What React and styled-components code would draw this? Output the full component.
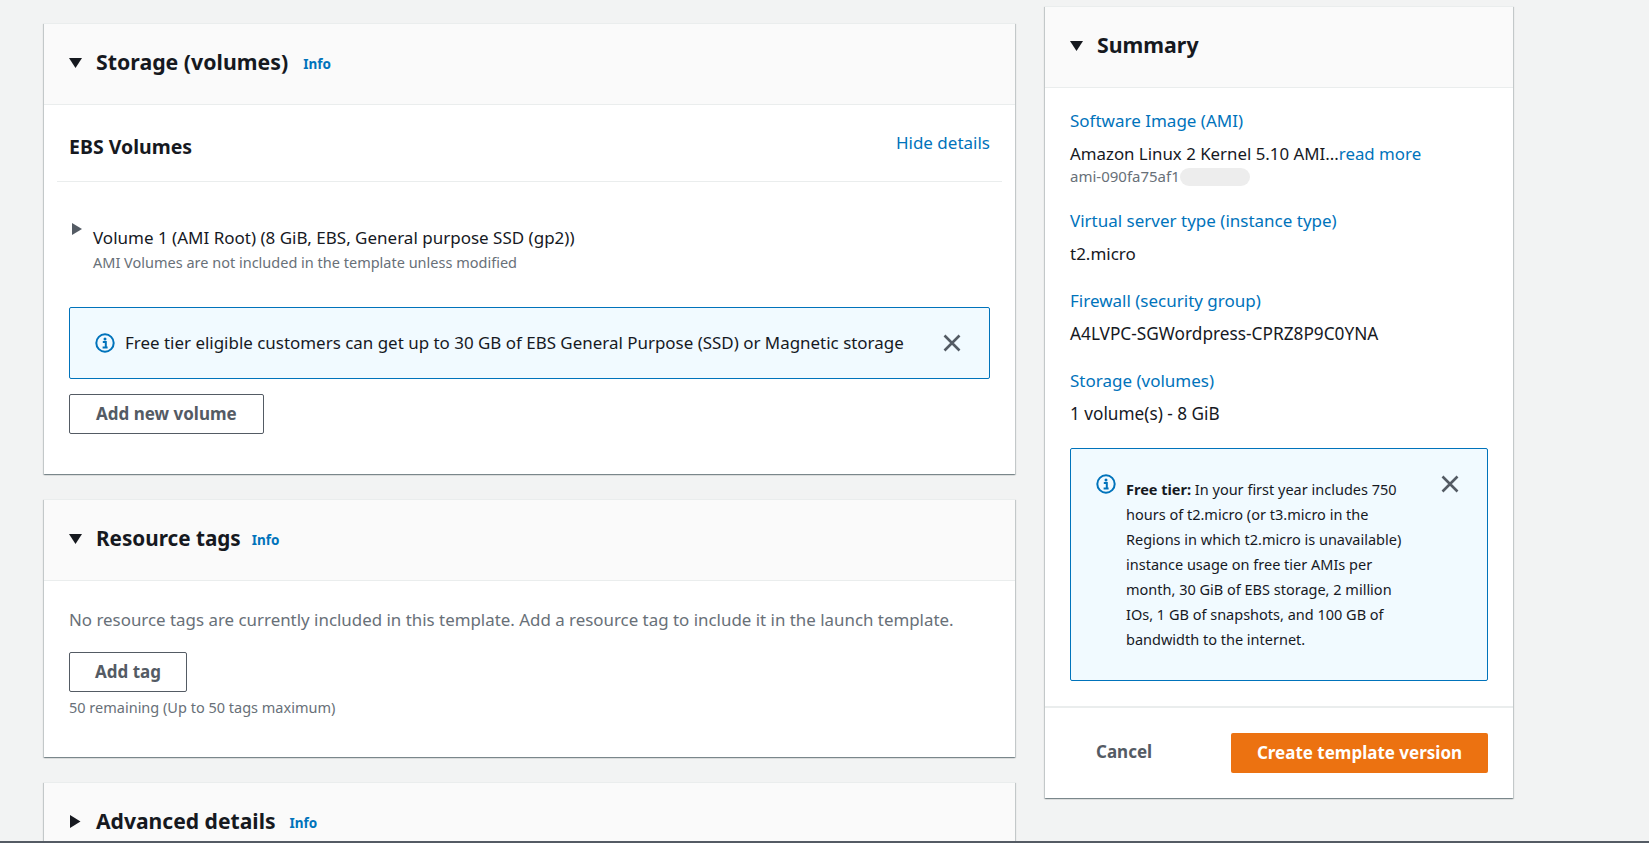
import React from 'react';
import styled, { createGlobalStyle } from 'styled-components';

const GlobalStyle = createGlobalStyle`
  html, body {
    margin: 0;
    padding: 0;
    background: #f2f3f3;
    font-family: "Noto Sans", "Open Sans", sans-serif;
    color: #16191f;
  }
  * { box-sizing: border-box; }
`;

const Page = styled.div`
  height: 843px;
  display: flex;
  flex-direction: column;
  overflow: hidden;
`;

const Content = styled.div`
  flex: 1;
  min-height: 0;
  overflow: hidden;
  display: flex;
  align-items: flex-start;
  padding-left: 44px;
  gap: 30px;
`;

const BottomRule = styled.div`
  height: 2px;
  flex: none;
  background: #545b64;
`;

const LeftColumn = styled.div`
  width: 971px;
  flex: none;
  padding-top: 23px;
  display: flex;
  flex-direction: column;
  gap: 25px;
`;

const Card = styled.section`
  background: #fff;
  border-top: 1px solid #eaeded;
  box-shadow: 0 1px 1px 0 rgba(0, 28, 36, 0.3), 1px 1px 1px 0 rgba(0, 28, 36, 0.15), -1px 1px 1px 0 rgba(0, 28, 36, 0.15);
`;

const SummaryCard = styled(Card)`
  width: 468px;
  flex: none;
  margin-top: 6px;
`;

const CardHeader = styled.header`
  height: 81px;
  background: #fafafa;
  border-bottom: 1px solid #eaeded;
  display: flex;
  align-items: center;
  padding: 0 0 4px 25px;
`;

const Caret = styled.svg`
  width: 13px;
  height: 13px;
  flex: none;
  margin-right: 14px;
  fill: ${p => p.$color || '#16191f'};
`;

const CardTitle = styled.h2`
  margin: 0;
  font-size: ${p => p.$size || 21.3}px;
  line-height: 28px;
  font-weight: 700;
  color: #16191f;
`;

const InfoLink = styled.a`
  margin-left: ${p => p.$gap || 15}px;
  font-size: 13.5px;
  line-height: 20px;
  font-weight: 700;
  color: #0073bb;
  position: relative;
  top: 2px;
`;

const StorageBody = styled.div`
  padding: 0 25px 40px;
`;

const EbsHeader = styled.div`
  margin: 0 -12px;
  padding: 7px 12px 0 12px;
  height: 77px;
  border-bottom: 1px solid #eaeded;
  display: flex;
  align-items: center;
  justify-content: space-between;
`;

const EbsTitle = styled.h3`
  margin: 0;
  font-size: 19.5px;
  line-height: 24px;
  font-weight: 700;
`;

const HideLink = styled.a`
  font-size: 17px;
  line-height: 24px;
  color: #0073bb;
  position: relative;
  top: -4px;
`;

const VolumeRow = styled.div`
  display: flex;
  align-items: flex-start;
  margin-top: 40px;
`;

const VolumeCaret = styled(Caret)`
  width: 12px;
  height: 14px;
  margin: 0 10px 0 2px;
`;

const VolumeTitle = styled.div`
  font-size: 17px;
  line-height: 24px;
  margin: 4px 0 2px;
`;

const Hint = styled.div`
  font-size: 14.5px;
  line-height: 20px;
  color: #687078;
`;

const Alert = styled.div`
  background: #f1faff;
  border: 1px solid #0073bb;
  border-radius: 2px;
  display: flex;
`;

const BannerAlert = styled(Alert)`
  height: 72px;
  margin-top: 35px;
  align-items: center;
  padding: 0 28px 0 25px;
`;

const InfoIcon = styled.svg`
  width: 20px;
  height: 20px;
  flex: none;
  color: #0073bb;
`;

const BannerText = styled.div`
  flex: 1;
  margin-left: 10px;
  font-size: 16.94px;
  line-height: 24px;
`;

const CloseIcon = styled.svg`
  width: 18px;
  height: 18px;
  flex: none;
  color: #545b64;
`;

const OutlineButton = styled.button`
  display: block;
  height: 40px;
  padding: 0 26px 2px;
  background: #fff;
  border: 1px solid #545b64;
  border-radius: 2px;
  font-family: inherit;
  font-size: 17px;
  font-weight: 700;
  color: #545b64;
`;

const AddVolumeButton = styled(OutlineButton)`
  margin-top: 15px;
`;

const TagsBody = styled.div`
  padding: 27px 25px 40px;
`;

const TagsText = styled.p`
  margin: 0;
  font-size: 16.9px;
  line-height: 24px;
  color: #687078;
`;

const AddTagButton = styled(OutlineButton)`
  margin: 20px 0 5px;
  padding: 0 25px 2px;
`;

const SummaryBody = styled.div`
  padding: 21px 25px 25px 25px;
`;

const SummaryGroup = styled.div`
  margin-bottom: ${p => p.$last ? 22 : 23}px;
`;

const SummaryLabel = styled.a`
  display: block;
  font-size: 17px;
  line-height: 24px;
  color: #0073bb;
`;

const SummaryValue = styled.div`
  font-size: ${p => p.$size || 17}px;
  line-height: 24px;
  margin-top: 9px;
  color: #16191f;
`;

const ReadMore = styled.a`
  color: #0073bb;
`;

const AmiId = styled.div`
  position: relative;
  font-size: 15px;
  line-height: 19px;
  color: #687078;
  margin-top: 1px;
`;

const Redaction = styled.span`
  position: absolute;
  left: 110px;
  top: 1px;
  width: 70px;
  height: 18px;
  border-radius: 9px;
  background: #ededed;
`;

const TierAlert = styled(Alert)`
  height: 233px;
  padding: 25px 25px 0 25px;
  align-items: flex-start;
`;

const TierText = styled.div`
  width: 282px;
  margin: 3px 0 0 10px;
  font-size: 14.5px;
  line-height: 25px;
  color: #16191f;
`;

const TierClose = styled(CloseIcon)`
  margin: 1px 0 0 33px;
`;

const SummaryFooter = styled.footer`
  border-top: 2px solid #eaeded;
  height: 92px;
  padding: 25px 25px 0 51px;
  display: flex;
  align-items: flex-start;
  justify-content: space-between;
`;

const CancelLink = styled.a`
  font-size: 17px;
  line-height: 38px;
  font-weight: 700;
  color: #545b64;
`;

const PrimaryButton = styled.button`
  width: 257px;
  height: 40px;
  padding-bottom: 2px;
  background: #ec7211;
  border: none;
  border-radius: 2px;
  font-family: inherit;
  font-size: 17px;
  font-weight: 700;
  color: #fff;
`;

const CaretDown = () => (
  <Caret viewBox="0 0 13 13"><path d="M0 2h13L6.5 12z" /></Caret>
);

const CaretRight = () => (
  <Caret viewBox="0 0 13 13"><path d="M1 0l10.5 6.5L1 13z" /></Caret>
);

const Info = () => (
  <InfoIcon viewBox="0 0 20 20" fill="none">
    <circle cx="10" cy="10" r="8.7" stroke="currentColor" strokeWidth="2" />
    <circle cx="10" cy="6" r="1.5" fill="currentColor" />
    <path d="M7.8 9h3v5M7.6 14.4h5" stroke="currentColor" strokeWidth="2" />
  </InfoIcon>
);

const CloseSvg = ({ as: Comp = CloseIcon }) => (
  <Comp viewBox="0 0 18 18" fill="none">
    <path d="M1.5 1.5l15 15M16.5 1.5l-15 15" stroke="currentColor" strokeWidth="2.6" />
  </Comp>
);

const App = () => (
  <>
    <GlobalStyle />
    <Page>
      <Content>
        <LeftColumn>
          <Card>
            <CardHeader>
              <CaretDown />
              <CardTitle>Storage (volumes)</CardTitle>
              <InfoLink>Info</InfoLink>
            </CardHeader>
            <StorageBody>
              <EbsHeader>
                <EbsTitle>EBS Volumes</EbsTitle>
                <HideLink>Hide details</HideLink>
              </EbsHeader>
              <VolumeRow>
                <VolumeCaret $color="#545b64" viewBox="0 0 12 14"><path d="M1 1l10 6-10 6z" /></VolumeCaret>
                <div>
                  <VolumeTitle>Volume 1 (AMI Root) (8 GiB, EBS, General purpose SSD (gp2))</VolumeTitle>
                  <Hint>AMI Volumes are not included in the template unless modified</Hint>
                </div>
              </VolumeRow>
              <BannerAlert>
                <Info />
                <BannerText>Free tier eligible customers can get up to 30 GB of EBS General Purpose (SSD) or Magnetic storage</BannerText>
                <CloseSvg />
              </BannerAlert>
              <AddVolumeButton>Add new volume</AddVolumeButton>
            </StorageBody>
          </Card>
          <Card>
            <CardHeader>
              <CaretDown />
              <CardTitle $size={20.7}>Resource tags</CardTitle>
              <InfoLink $gap={11}>Info</InfoLink>
            </CardHeader>
            <TagsBody>
              <TagsText>No resource tags are currently included in this template. Add a resource tag to include it in the launch template.</TagsText>
              <AddTagButton>Add tag</AddTagButton>
              <Hint>50 remaining (Up to 50 tags maximum)</Hint>
            </TagsBody>
          </Card>
          <Card>
            <CardHeader>
              <CaretRight />
              <CardTitle $size={21.1}>Advanced details</CardTitle>
              <InfoLink $gap={14}>Info</InfoLink>
            </CardHeader>
          </Card>
        </LeftColumn>
        <SummaryCard>
          <CardHeader>
            <CaretDown />
            <CardTitle>Summary</CardTitle>
          </CardHeader>
          <SummaryBody>
            <SummaryGroup>
              <SummaryLabel>Software Image (AMI)</SummaryLabel>
              <SummaryValue $size={16.85}>Amazon Linux 2 Kernel 5.10 AMI...<ReadMore>read more</ReadMore></SummaryValue>
              <AmiId>ami-090fa75af1<Redaction /></AmiId>
            </SummaryGroup>
            <SummaryGroup>
              <SummaryLabel>Virtual server type (instance type)</SummaryLabel>
              <SummaryValue>t2.micro</SummaryValue>
            </SummaryGroup>
            <SummaryGroup>
              <SummaryLabel>Firewall (security group)</SummaryLabel>
              <SummaryValue $size={17.26}>A4LVPC-SGWordpress-CPRZ8P9C0YNA</SummaryValue>
            </SummaryGroup>
            <SummaryGroup $last>
              <SummaryLabel>Storage (volumes)</SummaryLabel>
              <SummaryValue $size={17.2}>1 volume(s) - 8 GiB</SummaryValue>
            </SummaryGroup>
            <TierAlert>
              <Info />
              <TierText><b>Free tier:</b> In your first year includes 750 hours of t2.micro (or t3.micro in the Regions in which t2.micro is unavailable) instance usage on free tier AMIs per month, 30 GiB of EBS storage, 2 million IOs, 1 GB of snapshots, and 100 GB of bandwidth to the internet.</TierText>
              <CloseSvg as={TierClose} />
            </TierAlert>
          </SummaryBody>
          <SummaryFooter>
            <CancelLink>Cancel</CancelLink>
            <PrimaryButton>Create template version</PrimaryButton>
          </SummaryFooter>
        </SummaryCard>
      </Content>
      <BottomRule />
    </Page>
  </>
);

export default App;
